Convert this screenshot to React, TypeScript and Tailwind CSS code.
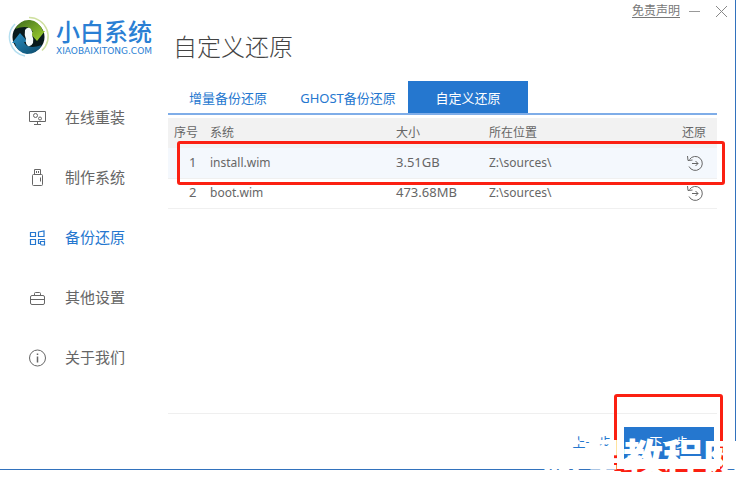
import type { ReactNode } from 'react'

// ---- Sidebar ----
interface NavItem { key: string; label: string; icon: ReactNode; active?: boolean }
const NAV: NavItem[] = [
  { key: 'online', label: '在线重装', icon: <MonitorIcon /> },
  { key: 'make', label: '制作系统', icon: <UsbIcon /> },
  { key: 'backup', label: '备份还原', icon: <BlocksIcon />, active: true },
  { key: 'other', label: '其他设置', icon: <CaseIcon /> },
  { key: 'about', label: '关于我们', icon: <InfoIcon /> },
]

const TABS = [
  { label: '增量备份还原' },
  { label: 'GHOST备份还原' },
  { label: '自定义还原', active: true },
]

// ---- Image files found on disk ----
const FILES = [
  { id: 1, name: 'install.wim', size: '3.51GB', path: 'Z:\\sources\\', selected: true },
  { id: 2, name: 'boot.wim', size: '473.68MB', path: 'Z:\\sources\\' },
]

export default function App() {
  return (
    <div className="h-screen overflow-hidden bg-white pr-0.5 pb-[7px] font-['Noto_Sans','Noto_Sans_CJK_SC',sans-serif] text-[#666]">
      <div className="relative flex h-full border-r border-b border-[#3272bd]">
        <Sidebar />
        <main className="flex min-w-0 flex-1 flex-col">
          <TitleBar />
          <h1 className="mt-1.5 pl-[5px] font-['Noto_Sans_CJK_SC',sans-serif] text-2xl font-light leading-9 text-[#444]">自定义还原</h1>
          <div className="mt-[17px] mr-[18px]">
            <Tabs />
            <FileTable />
          </div>
          <Footer />
        </main>
        <Watermark />
      </div>
    </div>
  )
}

function Sidebar() {
  return (
    <aside className="w-42 shrink-0 pt-4">
      <div className="flex items-center gap-1.5 pl-2">
        <LogoMark />
        <div className="whitespace-nowrap text-[#2a7fd4]">
          <div className="font-['Noto_Sans_CJK_SC',sans-serif] text-2xl font-medium leading-7">小白系统</div>
          <div className="font-['DejaVu_Sans',sans-serif] text-[9px] leading-3">XIAOBAIXITONG.COM</div>
        </div>
      </div>
      <nav className="mt-[29px]">
        {NAV.map((n) => (
          <a
            key={n.key}
            href={`#${n.key}`}
            className={`flex h-15 items-center gap-[18px] pl-7 font-['Noto_Sans_CJK_SC',sans-serif] text-[15px] ${n.active ? 'text-[#2577cf]' : 'text-[#666]'}`}
          >
            {n.icon}
            <span>{n.label}</span>
          </a>
        ))}
      </nav>
    </aside>
  )
}

function TitleBar() {
  return (
    <div className="flex h-[22px] items-center justify-end gap-2 pr-[7px]">
      <a href="#disclaimer" className="text-xs leading-4 text-[#777] underline underline-offset-2">免责声明</a>
      <button aria-label="最小化" className="text-[#999]">
        <svg width="13" height="13" viewBox="0 0 13 13" stroke="currentColor"><path d="M1 6.5h11" /></svg>
      </button>
      <button aria-label="关闭" className="ml-1.5 text-[#888]">
        <svg width="13" height="13" viewBox="0 0 13 13" stroke="currentColor"><path d="M1 1l11 11M12 1L1 12" /></svg>
      </button>
    </div>
  )
}

function Tabs() {
  return (
    <div role="tablist" className="flex border-b-2 border-[#7fade8]">
      {TABS.map((t) => (
        <button
          key={t.label}
          role="tab"
          aria-selected={!!t.active}
          className={`h-8 w-30 whitespace-nowrap pt-1 text-[13px] ${t.active ? 'bg-[#2577cf] text-white' : 'text-[#2577cf]'}`}
        >
          {t.label}
        </button>
      ))}
    </div>
  )
}

function FileTable() {
  return (
    <div className="relative mt-[3px]">
      <table className="w-full table-fixed text-left text-xs">
        <thead>
          <tr className="h-[30px] bg-[#f2f2f2]">
            <th className="w-[42px] pl-1.5 font-normal">序号</th>
            <th className="w-[186px] font-normal">系统</th>
            <th className="w-[93px] font-normal">大小</th>
            <th className="font-normal">所在位置</th>
            <th className="w-[35px] font-normal">还原</th>
          </tr>
        </thead>
        <tbody>
          {FILES.map((f) => (
            <tr key={f.id} className={`h-[30px] border-b border-[#f0f0f0] ${f.selected ? 'bg-[#f4f8fd]' : ''}`}>
              <td className="pl-[21px] text-[13px]">{f.id}</td>
              <td>{f.name}</td>
              <td className="text-[13px]">{f.size}</td>
              <td>{f.path}</td>
              <td className="pl-1">
                <button aria-label={`还原 ${f.name}`} className="block"><RestoreIcon /></button>
              </td>
            </tr>
          ))}
        </tbody>
      </table>
      {/* highlight round the selected row */}
      <div className="pointer-events-none absolute top-[23px] -right-2 left-[9px] h-11 rounded-[3px] border-3 border-[#fb2012]" />
    </div>
  )
}

function Footer() {
  return (
    <footer className="relative mt-auto mr-[18px] flex h-14 items-start justify-end border-t border-[#efefef] pt-[13px] pr-[3px] text-[13px]">
      <button className="h-8 w-16 text-[#2577cf]">上一步</button>
      <button className="h-8 w-[90px] bg-[#2577cf] text-white">下一步</button>
      <div className="pointer-events-none absolute -top-5 -right-1.5 h-[78px] w-[109px] rounded-[3px] border-3 border-[#fb2012]" />
    </footer>
  )
}

function Watermark() {
  return (
    <div className="pointer-events-none absolute -right-2 -bottom-4 whitespace-nowrap font-['Noto_Sans_CJK_SC',sans-serif] text-[40px] font-black leading-[58px] text-white">
      新星教程网
    </div>
  )
}

// ---- Icons ----
function LogoMark() {
  return (
    <svg width="42" height="42" viewBox="0 0 42 42" fill="none" className="shrink-0">
      <defs>
        <linearGradient id="green" x1="0" y1="0" x2="1" y2="1">
          <stop offset="0" stopColor="#3c6a1c" />
          <stop offset="1" stopColor="#a2d42f" />
        </linearGradient>
        <linearGradient id="blue" x1="0" y1="0" x2="1" y2="1">
          <stop offset="0" stopColor="#2b93c8" />
          <stop offset="1" stopColor="#0b4766" />
        </linearGradient>
      </defs>
      <path d="M21 1.500a19 19 0 0 1 13 33" stroke="#cfe0a0" strokeWidth="1.500" />
      <path d="M17 40A19 19 0 0 1 7 8" stroke="#b5dff0" strokeWidth="1.500" />
      <circle cx="20.500" cy="21" r="16" fill="#081a1c" />
      <path d="M7 13Q13 3 22 4q9 1 13 11h2l-8 10-8-9h4Q21 8 7 13Z" fill="url(#green)" />
      <path d="M34 29Q29 38 19 38 8 36 7 27H4l8-10 8 9h-4q3 8 18 3Z" fill="url(#blue)" />
      <path d="M17 14q3-4 6-1 2 3 1 6 2 4 1 8-2 4-5 3-3-2-2-7-2-4-1-9Z" fill="#f5fbfc" />
    </svg>
  )
}

function MonitorIcon() {
  return (
    <svg width="19" height="19" viewBox="0 0 19 19" fill="none" stroke="currentColor">
      <path d="M1.500 3.500h16v10h-16zM9.500 13.500v3M6 16.500h7" />
      <circle cx="7.500" cy="7.500" r="2" />
      <circle cx="12" cy="10.500" r="1.500" />
    </svg>
  )
}

function UsbIcon() {
  return (
    <svg width="19" height="19" viewBox="0 0 19 19" fill="none" stroke="currentColor">
      <path d="M6.500 6.500v-5h6v5M8.500 3v2M10.500 3v2M12.500 9.500v4" />
      <rect x="4.500" y="6.500" width="10" height="11" rx="1" />
    </svg>
  )
}

function BlocksIcon() {
  return (
    <svg width="19" height="19" viewBox="0 0 19 19" fill="none" stroke="currentColor" strokeWidth="1.200">
      <path d="M2.500 4.500h5v4h-5zM10.500 4l5.500-1v5.500h-5.500zM2.500 11.500h5v5h-5zM16.500 12.500v-1h-6v4h1.500" />
      <path d="M12.500 13.500h4V17h-2.500q-1.500 0-1.500-1.500z" />
    </svg>
  )
}

function CaseIcon() {
  return (
    <svg width="19" height="19" viewBox="0 0 19 19" fill="none" stroke="currentColor">
      <rect x="2.500" y="7.500" width="14" height="9" rx="1.500" />
      <path d="M2.500 11.500h14M6.500 7.500V5.500q0-1 1-1h4q1 0 1 1v2" />
    </svg>
  )
}

function InfoIcon() {
  return (
    <svg width="19" height="19" viewBox="0 0 19 19" fill="none" stroke="currentColor">
      <circle cx="9.500" cy="10" r="8" />
      <path d="M9.500 8.500v6M9.500 5.500V7" strokeWidth="1.500" />
    </svg>
  )
}

function RestoreIcon() {
  return (
    <svg width="18" height="18" viewBox="0 0 18 18" fill="none" stroke="currentColor">
      <path d="M3.500 5.500A7 7 0 1 1 3 12.500M1.500 2l.5 4.500L6.500 6" />
      <path d="M6 9.500h6M9.500 7L12 9.500 9.500 12" />
    </svg>
  )
}
